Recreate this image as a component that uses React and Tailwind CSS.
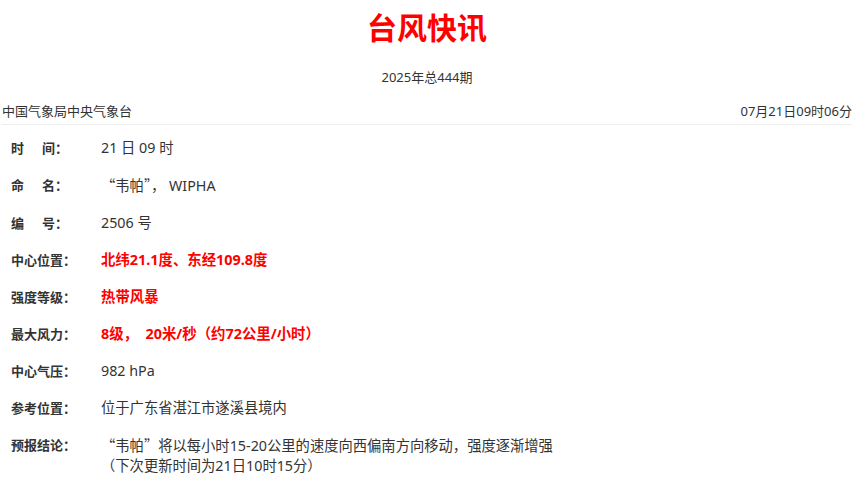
const rows = [
    { label: ['时', '间'], value: '21 日 09 时' },
    { label: ['命', '名'], value: <><Q>“</Q>韦帕<Q>”</Q>， WIPHA</> },
    { label: ['编', '号'], value: '2506 号' },
    { label: '中心位置', value: '北纬21.1度、东经109.8度', red: true },
    { label: '强度等级', value: '热带风暴', red: true },
    { label: '最大风力', value: '8级，  20米/秒（约72公里/小时）', red: true },
    { label: '中心气压', value: '982 hPa' },
    { label: '参考位置', value: '位于广东省湛江市遂溪县境内' },
    {
        label: '预报结论',
        value: (
            <>
                <div><Q>“</Q>韦帕<Q>”</Q>将以每小时15-20公里的速度向西偏南方向移动，强度逐渐增强</div>
                <div>（下次更新时间为21日10时15分）</div>
            </>
        ),
    },
];

// 引号用中文字体，保持全角
function Q({ children }) {
    return <span className="font-['Noto_Sans_CJK_SC']">{children}</span>;
}

// 两个字的标签中间留空
const Label = ({ label }) => (
    <span className="w-[90px] shrink-0 font-bold text-[#333] text-[13px]">
        {Array.isArray(label) ? (
            <>
                {label[0]}
                <span className="inline-block w-[18px]"></span>
                {label[1]}：
            </>
        ) : (
            <>{label}：</>
        )}
    </span>
);

export default function App() {
    return (
        <div
            className="min-h-screen bg-white"
            style={{ fontFamily: '"Noto Sans", "Noto Sans CJK SC", sans-serif' }}
        >
            <div className="ml-[2px] w-[850px]">
                <h1 className="mt-[6px] h-[40px] leading-[40px] text-center text-[30px] font-bold text-[#ff0000] font-['Noto_Sans_CJK_SC']">
                    台风快讯
                </h1>
                <p className="mt-[21px] text-center text-[13px] leading-[20px] text-[#333]">2025年总444期</p>

                <div className="mt-[14px] flex justify-between border-b border-[#eeeeee] pb-[3px] text-[13px] leading-[20px] text-[#333]">
                    <span>中国气象局中央气象台</span>
                    <span>07月21日09时06分</span>
                </div>

                <div className="pt-[4.5px] pl-[9px]">
                    {rows.map((row, i) => (
                        <div key={i} className="flex items-start py-[8.5px] leading-[20px]">
                            <Label label={row.label} />
                            <div
                                className={
                                    row.red
                                        ? 'whitespace-pre text-[14.4px] font-bold text-[#ff0000]'
                                        : 'text-[14.3px] text-[#333]'
                                }
                            >
                                {row.value}
                            </div>
                        </div>
                    ))}
                </div>
            </div>
        </div>
    );
}
